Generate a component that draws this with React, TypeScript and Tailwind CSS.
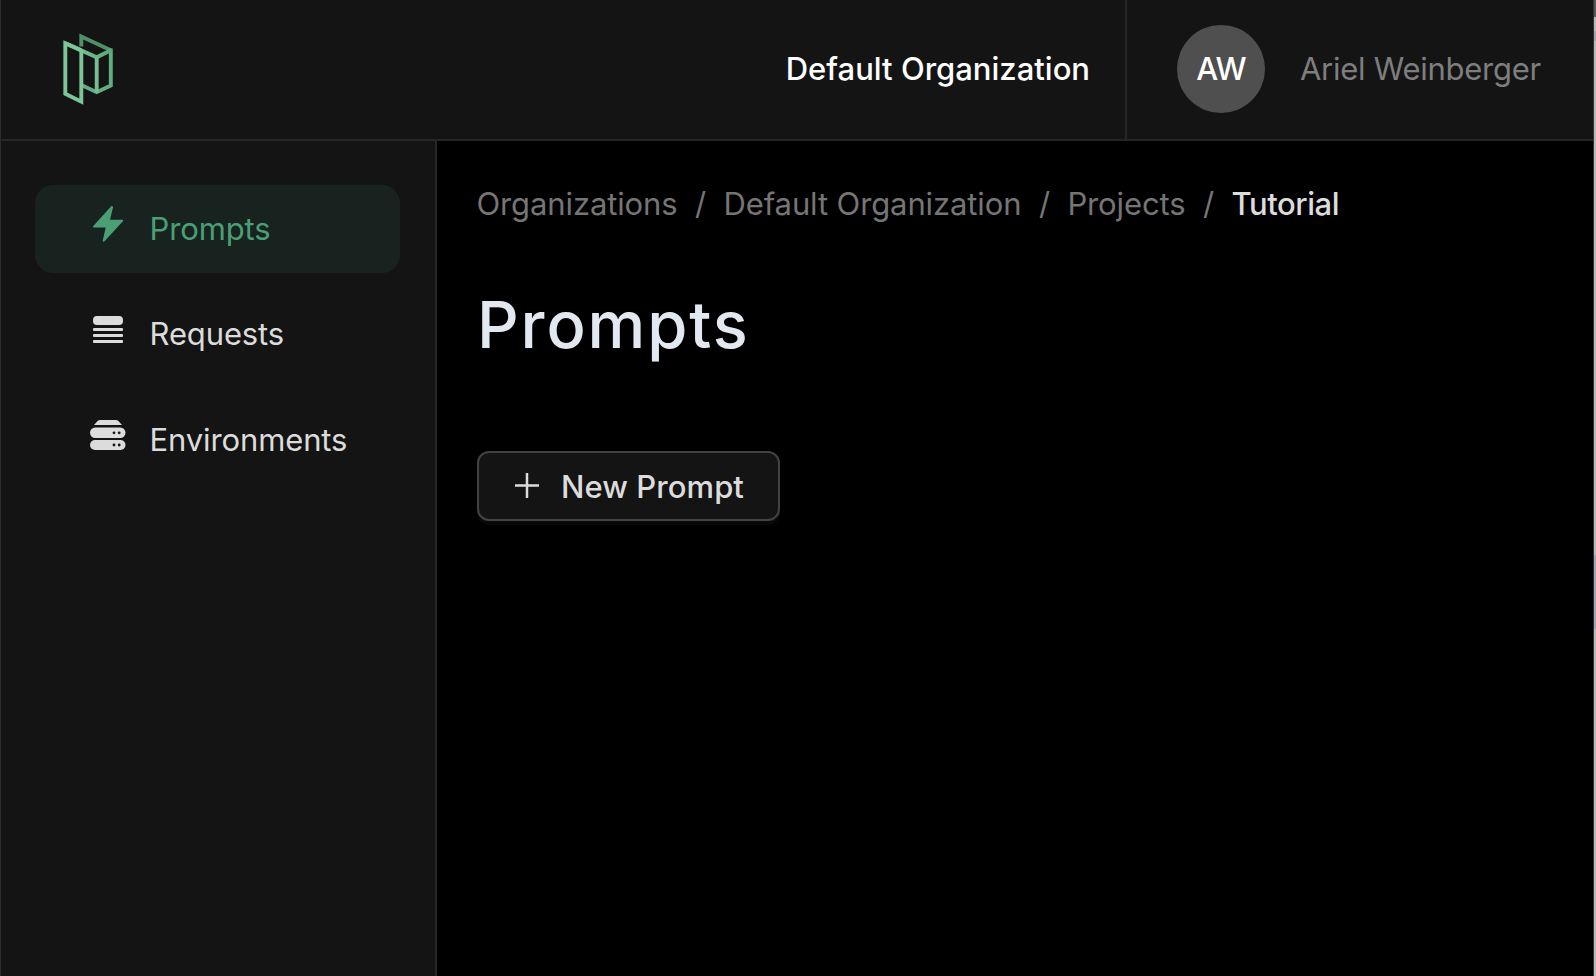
import React from "react";

const Slash = () => <span className="ml-[17.6px] mr-[17.4px]">/</span>;

function Logo() {
  return (
    <svg width="52" height="74" viewBox="0 0 52 74" fill="none" strokeWidth="3.9">
      <defs>
        <linearGradient id="g" x1="0" y1="0" x2="1" y2="0">
          <stop offset="0" stopColor="#82cb9c" />
          <stop offset="1" stopColor="#5ba578" />
        </linearGradient>
      </defs>
      <path d="M19.300 14.500V4.500L48.800 18.200" stroke="#4f9069" />
      <path d="M48.800 16.500V53.500L34.700 60.200L19.300 53" stroke="#62ad80" />
      <path d="M3.300 11.200L34.700 25.300L49.500 17.900" stroke="url(#g)" />
      <path d="M34.700 25.300V60.500" stroke="#74be90" />
      <path d="M19.300 18.400L3.300 11.200V61.700L19.300 69.700V18" stroke="#7cc596" />
    </svg>
  );
}

function BoltIcon() {
  return (
    <svg width="30" height="36" viewBox="0 0 30 36" fill="#4a9f75">
      <path d="M18.200.2c.9-.6 2 .1 1.800 1.200L17 13.800h12.300c.9 0 1.100.9.600 1.500L11.500 35.300c-.8.900-2 .2-1.700-1L12.700 21.600H.8c-.9 0-1.100-.9-.5-1.500z" />
    </svg>
  );
}

function RowsIcon() {
  return (
    <svg width="30" height="28" viewBox="0 -1 30 28" fill="#dcdcdc">
      <rect width="30" height="9" rx="4" />
      <rect y="12" width="30" height="3" rx="1" />
      <rect y="18" width="30" height="3" rx="1" />
      <rect y="24" width="30" height="3" rx="1" />
    </svg>
  );
}

function ServerIcon() {
  return (
    <svg width="36" height="30" viewBox="0 0 36 30" fill="#dcdcdc">
      <path d="M10.500 0h15c1.500 0 2.500.5 3.300 1.500L32 5H4l3.200-3.500C8 .5 9 0 10.500 0z" />
      <rect y="7.500" width="35.500" height="10.500" rx="5.200" />
      <rect y="20" width="35.500" height="10" rx="5" />
      <g fill="#141414">
        <circle cx="24" cy="12.800" r="1.400" /><circle cx="29.200" cy="12.800" r="1.400" />
        <circle cx="24" cy="25" r="1.400" /><circle cx="29.200" cy="25" r="1.400" />
      </g>
    </svg>
  );
}

function NavItem({ icon, label, active }: { icon: React.ReactNode; label: string; active?: boolean }) {
  return (
    <a className={"flex h-[88px] items-center rounded-[18px] pl-[54px] " + (active ? "bg-[#18221f] text-[#4a9f75]" : "text-[#dcdcdc]")}>
      <span className="mb-[10px] flex w-[37px] justify-center">{icon}</span>
      <span className="ml-[23.5px]">{label}</span>
    </a>
  );
}

export default function App() {
  return (
    <div className="flex h-[976px] w-[1596px] overflow-hidden font-['Inter',sans-serif] text-[31px] leading-[40px] tracking-[-0.12px]">
      <div className="flex w-[1594px] flex-col border-l border-r border-l-[#2c2c2c] border-r-[#333333] bg-black">
        <header className="flex h-[141px] shrink-0 items-stretch border-b-2 border-[#262626] bg-[#141414]">
          <div className="flex flex-1 items-start pl-[61px] pt-[32px]"><Logo /></div>
          <div className="flex items-center border-r-2 border-[#262626] pb-px pr-[35px] font-medium tracking-normal text-white">
            <span>Default Organization</span>
          </div>
          <div className="flex w-[466px] items-center pb-px pl-[50px]">
            <div className="flex size-[88px] items-center justify-center rounded-full bg-[#4f4f4f] pb-px font-medium tracking-[-0.8px] text-white">AW</div>
            <span className="ml-[35px] tracking-[-0.27px] text-[#7e7e7e]">Ariel Weinberger</span>
          </div>
        </header>
        <div className="flex flex-1">
          <aside className="w-[436px] shrink-0 border-r-2 border-[#262626] bg-[#141414] pl-[34px] pr-[35px] pt-[44px]">
            <nav className="flex flex-col gap-[17px]">
              <NavItem active icon={<BoltIcon />} label="Prompts" />
              <NavItem icon={<RowsIcon />} label="Requests" />
              <div className="pt-px"><NavItem icon={<ServerIcon />} label="Environments" /></div>
            </nav>
          </aside>
          <main className="flex flex-1 flex-col items-start pl-[40px] pt-[43px]">
            <div className="-ml-[0.5px] flex whitespace-nowrap text-[#757575]">
              <span>Organizations</span><Slash /><span>Default Organization</span><Slash /><span>Projects</span><Slash />
              <span className="font-medium tracking-[-0.45px] text-[#dcdcdc]">Tutorial</span>
            </div>
            <h1 className="mt-[61px] text-[65px] font-medium leading-[80px] tracking-[1.9px] text-[#e2e8f0]">Prompts</h1>
            <button className="mt-[86px] flex h-[70px] w-[303px] items-center rounded-[12px] border-2 border-[#424242] bg-[#141414] pl-[36px] font-medium tracking-[0.06px] text-[#dcdcdc] shadow-[0_4px_0_#080808]">
              <svg className="-mt-px" width="24" height="25" viewBox="0 0 24 25" stroke="#dcdcdc" strokeWidth="2.500"><path d="M12 0V25M0 12.500H24" /></svg>
              <span className="ml-[22px] mt-px">New Prompt</span>
            </button>
          </main>
        </div>
      </div>
      <div className="flex w-[2px] flex-col bg-[#b8b8b8]">
        <div className="h-[17px] bg-[#555555]" />
        <div className="mt-[14px] h-[10px] bg-[#a5a5b0]" />
        <div className="mt-[514px] h-[74px] bg-[#a3a3b0]" />
      </div>
    </div>
  );
}
